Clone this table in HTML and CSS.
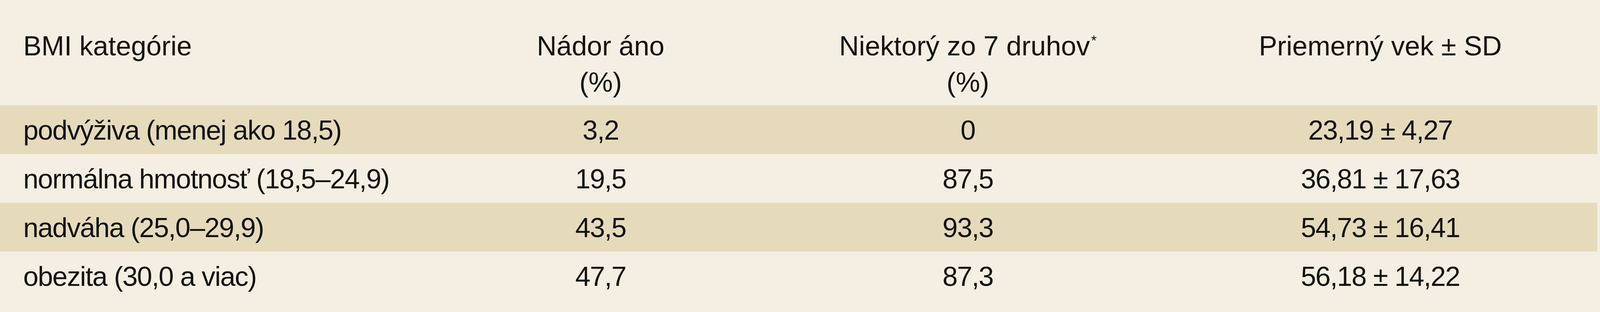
FILE: index.html
```html
<!DOCTYPE html>
<html lang="sk">
<head>
<meta charset="utf-8">
<title>BMI kategórie</title>
<link rel="stylesheet" href="styles.css">
</head>
<body>
<table class="bmi-table">
  <colgroup>
    <col class="c1"><col class="c2"><col class="c3"><col class="c4">
  </colgroup>
  <thead>
    <tr class="head">
      <th class="label">BMI kategórie</th>
      <th>Nádor áno<br>(%)</th>
      <th>Niektorý zo 7 druhov<span class="ast">*</span><br>(%)</th>
      <th>Priemerný vek ± SD</th>
    </tr>
  </thead>
  <tbody>
    <tr class="dark">
      <td class="label">podvýživa (menej ako 18,5)</td>
      <td>3,2</td>
      <td>0</td>
      <td>23,19 ± 4,27</td>
    </tr>
    <tr class="light">
      <td class="label">normálna hmotnosť (18,5–24,9)</td>
      <td>19,5</td>
      <td>87,5</td>
      <td>36,81 ± 17,63</td>
    </tr>
    <tr class="dark">
      <td class="label">nadváha (25,0–29,9)</td>
      <td>43,5</td>
      <td>93,3</td>
      <td>54,73 ± 16,41</td>
    </tr>
    <tr class="light">
      <td class="label">obezita (30,0 a viac)</td>
      <td>47,7</td>
      <td>87,3</td>
      <td>56,18 ± 14,22</td>
    </tr>
  </tbody>
</table>
</body>
</html>
```
FILE: styles.css
```css
html, body {
  margin: 0;
  padding: 0;
  background: #f4efe2;
}

body {
  font-family: "Liberation Sans", Arial, sans-serif;
  color: #121212;
}

.bmi-table {
  width: 99.84%;
  table-layout: fixed;
  border-collapse: collapse;
  border-spacing: 0;
  font-size: 70px;
}

.c1 { width: 26.84%; }
.c2 { width: 21.52%; }
.c3 { width: 24.46%; }
.c4 { width: 27.18%; }

.bmi-table th,
.bmi-table td {
  padding: 0;
  text-align: center;
  white-space: nowrap;
}

.bmi-table th {
  font-weight: normal;
  letter-spacing: 0;
  line-height: 93px;
  padding: 72px 0 12px;
  vertical-align: top;
}

.bmi-table td {
  letter-spacing: -1.6px;
  line-height: 122px;
  padding-top: 3px;
  vertical-align: top;
}

.bmi-table .label {
  text-align: left;
  padding-left: 1.45vw;
}

.head { background: #f4efe2; }
.dark { background: #e5dbbb; }
.light { background: #f4efe2; }

.ast {
  font-size: 36px;
  vertical-align: 25px;
  line-height: 0;
  margin-left: 3px;
}
```
